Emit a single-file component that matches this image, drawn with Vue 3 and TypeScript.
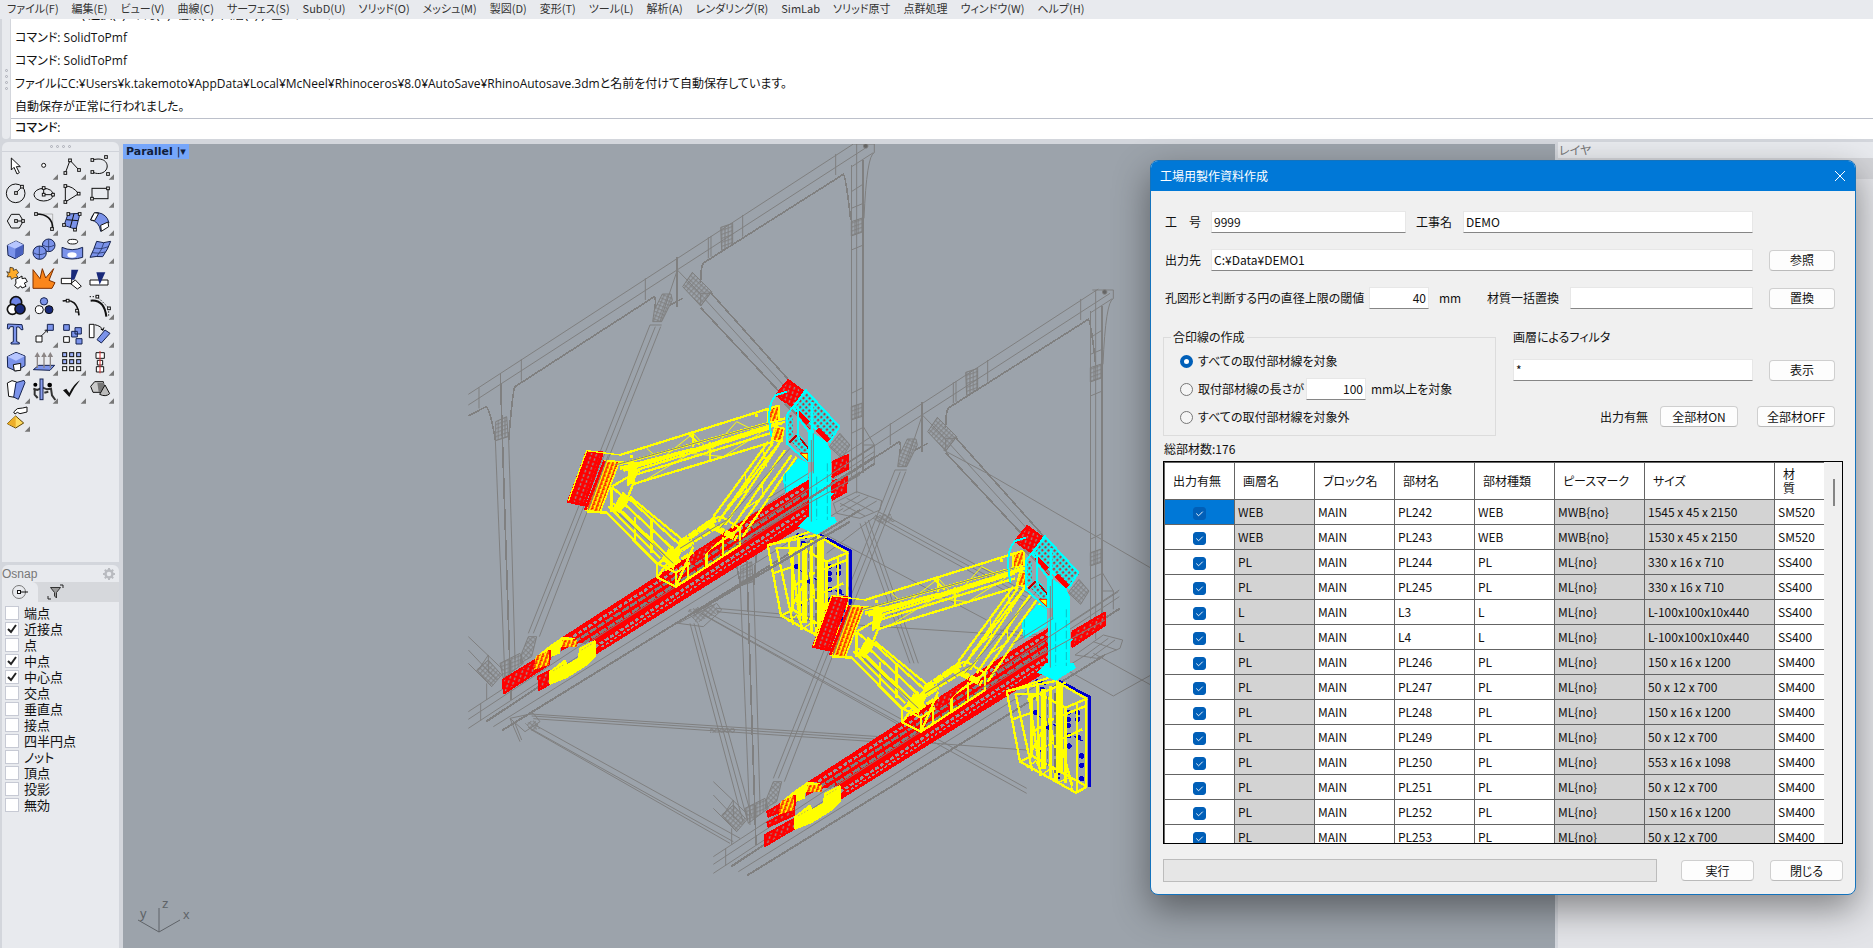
<script setup lang="ts">
import { ref } from 'vue'

const menus = ['ファイル(F)', '編集(E)', 'ビュー(V)', '曲線(C)', 'サーフェス(S)', 'SubD(U)', 'ソリッド(O)', 'メッシュ(M)', '製図(D)', '変形(T)', 'ツール(L)', '解析(A)', 'レンダリング(R)', 'SimLab', 'ソリッド原寸', '点群処理', 'ウィンドウ(W)', 'ヘルプ(H)']

const history = [
  'SolidToPmf ( 選択(S)  確認(C)  種類(T)  画層(L) ): 全オブジェクト',
  'コマンド: SolidToPmf',
  'コマンド: SolidToPmf',
  'ファイルにC:¥Users¥k.takemoto¥AppData¥Local¥McNeel¥Rhinoceros¥8.0¥AutoSave¥RhinoAutosave.3dmと名前を付けて自動保存しています。',
  '自動保存が正常に行われました。',
]

interface Tool { name: string; art: string; more: boolean }
const K = 'fill="none" stroke="#111" stroke-width="3"'
const sq = (x: number, y: number, f = '#fff', s = 8) =>
  `<rect x="${x - s / 2}" y="${y - s / 2}" width="${s}" height="${s}" fill="${f}" stroke="#111" stroke-width="3"/>`
const B = 'fill="#7b93ea" stroke="#15224f" stroke-width="3" stroke-linejoin="round"'
const W = 'fill="#fff" stroke="#111" stroke-width="3" stroke-linejoin="round"'
const tool = (name: string, art: string, more = true): Tool => ({ name, art, more })

// Each drawing sits on an 84-unit square.
const tools: Tool[] = [
  tool('選択', `<path d="M28 18V54l8-8 9 20 7-4-9-18h12z" ${W}/>`, false),
  tool('点', `<circle cx="41" cy="40" r="6" ${W}/>`),
  tool('ポリライン', `<path d="M22 63 36 25 63 54" ${K}/>${sq(22, 63)}${sq(36, 25)}${sq(63, 54)}`),
  tool('曲線', `<path d="M19 24C60 12 70 40 60 54S30 66 19 60" ${K}/>${sq(19, 24)}${sq(60, 15)}${sq(19, 60)}${sq(66, 66)}`),
  tool('円', `<circle cx="41" cy="40" r="28" ${K}/><path d="M42 39 60 20" ${K}/>${sq(42, 39)}${sq(60, 20)}`),
  tool('楕円', `<ellipse cx="41" cy="44" rx="29" ry="19" ${K}/><path d="M41 44V24M41 44H69" ${K}/>${sq(41, 44)}${sq(41, 24)}${sq(69, 44)}`),
  tool('円弧', `<path d="M22 18Q44 18 62 41M22 18V66L62 41" ${K}/>${sq(22, 18)}${sq(22, 66)}${sq(62, 41)}`),
  tool('長方形', `<rect x="18" y="25" width="48" height="31" ${K}/>${sq(66, 25)}${sq(18, 56)}`),
  tool('多角形', `<path d="M16 39 28 19H52L64 39 52 60H28z" ${K}/><path d="M42 39H64" ${K}/>${sq(42, 39)}${sq(63, 39)}`),
  tool('フィレット', `<path d="M18 18H68V62" fill="none" stroke="#999" stroke-width="2"/><path d="M18 18Q68 18 68 62" fill="none" stroke="#111" stroke-width="5"/>${sq(18, 18)}${sq(66, 63)}`),
  tool('サーフェス', `<path d="M30 18 66 16 54 64 18 52z" ${B}/><path d="M48 17 37 58M25 35 60 38" ${K}/>${sq(31, 18)}${sq(65, 18)}${sq(18, 51)}${sq(51, 65)}`),
  tool('スイープ', `<path d="M14 36Q22 10 36 14Q62 18 69 44Q54 46 44 70Q40 40 14 36z" ${B}/><path d="M14 36 25 14 38 16 26 38zM66 42 68 56 46 70 44 52z" ${W}/>`),
  tool('直方体', `<path d="M16 28 42 15 64 26 63 54 39 68 18 58z" ${B}/><path d="M16 28 40 38 64 26 42 15z" fill="#b7c6ff"/><path d="M40 38 39 68 63 54 64 26z" fill="#4a62c0"/>`),
  tool('球', `<circle cx="56" cy="28" r="19" ${B}/><path d="M38 27Q55 38 74 27M56 10V46" fill="none" stroke="#15224f" stroke-width="2"/><circle cx="29" cy="50" r="20" ${B}/><path d="M10 50Q28 62 48 50M28 30V70" fill="none" stroke="#15224f" stroke-width="2"/>`),
  tool('円筒', `<ellipse cx="44" cy="17" rx="15" ry="7" ${W}/><path d="M12 34Q42 48 74 34V64Q42 74 12 64z" ${B}/><ellipse cx="42" cy="57" rx="14" ry="8" fill="#fff"/>`),
  tool('メッシュ', `<path d="M32 16Q52 24 74 16Q66 40 50 62Q30 60 12 64Q24 40 32 16z" ${B}/><path d="M54 19Q48 42 32 62M24 36Q46 42 68 32M18 50Q38 54 58 48" fill="none" stroke="#15224f" stroke-width="2"/>`),
  tool('ブール', `<path d="M14 23 23 26 24 10 34 12 34 19 43 16 50 26 43 32 48 40 37 41 28 46 26 38 15 39 19 30z" fill="#ffab28" stroke="#111" stroke-width="2"/><path d="M41 46 50 42 60 36 60 44 70 42 76 53 67 57 72 67 60 72 56 66 48 73 38 65 42 57z" ${W} />`),
  tool('分解', `<path d="M9 17 30 44 37 14 47 42 71 14 57 49 75 56 66 73H9z" fill="#fa861c" stroke="#7e3000" stroke-width="3"/>`, false),
  tool('トリム', `<path d="M10 43H41V59H10zM38 59 52 48 70 67 58 75z" ${W}/><path d="M40 17H61L49 47H39z" fill="#18297a"/>`, false),
  tool('分割', `<rect x="12" y="48" width="54" height="15" ${W}/><path d="M31 25H58L41 62z" fill="#18297a"/>`, false),
  tool('グループ', `<circle cx="42" cy="31" r="17" fill="#6c83e7" stroke="#111" stroke-width="5"/><circle cx="31" cy="52" r="15" fill="#fff" stroke="#111" stroke-width="5"/><circle cx="54" cy="51" r="15" fill="#18297a" stroke="#111" stroke-width="5"/>`),
  tool('グループ解除', `<circle cx="42" cy="28" r="11" ${B}/><circle cx="28" cy="53" r="12" ${W}/><circle cx="57" cy="53" r="12" fill="#18297a" stroke="#111" stroke-width="3"/>`, false),
  tool('点編集', `<path d="M14 27Q58 17 63 70" fill="none" stroke="#111" stroke-width="5"/>${sq(29, 26)}${sq(57, 56)}`, false),
  tool('制御点', `<path d="M14 26Q55 22 61 74" fill="none" stroke="#111" stroke-width="6"/><path d="M11 14H34L68 48V74" fill="none" stroke="#111" stroke-width="3" stroke-dasharray="4 5"/>${sq(34, 14)}${sq(69, 49)}`),
  tool('文字', `<path d="M17 12 60 14 63 29 57 29 51 21H44V65L52 68V72H27V68L34 65V20H25L21 27 16 26z" ${B}/>`, false),
  tool('移動', `<rect x="18" y="48" width="18" height="18" ${W}/><path d="M33 49 52 30M52 30l-8 1M52 30l0 8" ${K}/><rect x="52" y="13" width="18" height="18" ${B}/>`),
  tool('配列', `<g ${B}><path d="M17 14H34V31H17zM51 23H70V42H51zM41 34H58V51H41zM54 56H72V72H54z"/></g><rect x="17" y="50" width="17" height="17" ${W}/>`, false),
  tool('回転', `<rect x="10" y="13" width="14" height="40" ${W}/><path d="M33 59 57 30 72 40 46 69z" ${B}/><path d="M26 14Q46 18 51 31L44 27M51 31l3-9" ${K}/>`),
  tool('ソリッド編集', `<path d="M16 26 42 13 69 24V53L42 69 17 58z" ${B}/><path d="M17 26 42 38 68 25 42 14z" fill="#b7c6ff"/><path d="M34 50 56 46V67L37 69z" ${W}/>`),
  tool('押し出し', `<path d="M10 65 26 52H74L60 67z" ${B}/><path d="M22 60V20M42 60V20M61 60V20M22 16l-5 9h10zM42 16l-5 9h10zM61 16l-5 9h10z" stroke="#8b8585" stroke-width="4" fill="#8b8585"/>`),
  tool('矩形配列', [20, 41, 62].map(y => [20, 41, 62].map(x => sq(x, y, y < 50 ? '#9cb1fa' : '#fff', 12)).join('')).join('')),
  tool('整列', `<rect x="30" y="14" width="25" height="17" ${W}/><rect x="34" y="37" width="16" height="14" ${W}/><rect x="31" y="56" width="22" height="16" ${W}/><path d="M42 9V76" stroke="#dd3030" stroke-width="3"/>`),
  tool('変形', `<path d="M16 21 30 14 44 18 38 64 20 61z" ${W}/><path d="M42 20 66 13 69 20 49 70 35 63z" ${B}/>`),
  tool('解析', `<circle cx="16" cy="26" r="6"/><circle cx="59" cy="27" r="7"/><path d="M10 38 22 42 38 35 51 40 63 38 66 58 76 72M14 38V56L23 66M43 50 55 47" fill="none" stroke="#333" stroke-width="6"/><rect x="30" y="9" width="9" height="62" fill="#8da0ef" stroke="#15224f" stroke-width="3"/>`),
  tool('検査', `<path d="M15 43 25 38 34 51Q48 23 66 13Q48 34 34 63z" fill="#111"/>`),
  tool('表示', `<path d="M14 31 26 17 52 17 55 33 45 49 21 49z" fill="#ccc" stroke="#111" stroke-width="3"/><path d="M34 20H54L52 45 38 49z" fill="#777"/><path d="M57 27 71 53Q59 64 41 55z" fill="#bbb" stroke="#111" stroke-width="3"/>`),
  tool('取得', `<path d="M16 59 41 36 65 57 41 72z" fill="#ffdc61" stroke="#5e4300" stroke-width="3"/><path d="M41 36V70L16 59z" fill="#edae29"/><path d="M35 24 46 14 62 12 75 9V24L54 29 46 25 39 30z" ${W}/>`),
]

const snaps = ref([
  { name: '端点', on: false }, { name: '近接点', on: true }, { name: '点', on: false },
  { name: '中点', on: true }, { name: '中心点', on: true }, { name: '交点', on: false },
  { name: '垂直点', on: false }, { name: '接点', on: false }, { name: '四半円点', on: false },
  { name: 'ノット', on: false }, { name: '頂点', on: false }, { name: '投影', on: false },
  { name: '無効', on: false },
])

const job = ref('9999')
const project = ref('DEMO')
const folder = ref('C:¥Data¥DEMO1')
const threshold = ref('40')
const replacement = ref('')
const minLength = ref('100')
const layerFilter = ref('*')
const markMode = ref('all')

const headers = ['出力有無', '画層名', 'ブロック名', '部材名', '部材種類', 'ピースマーク', 'サイズ', '材質']
const part = (kind: string, no: string, mark: string, size: string, grade: string) =>
  ({ on: true, kind, no, mark, size, grade })
const parts = ref([
  part('WEB', 'PL242', 'MWB{no}', '1545 x 45 x 2150', 'SM520'),
  part('WEB', 'PL243', 'MWB{no}', '1530 x 45 x 2150', 'SM520'),
  part('PL', 'PL244', 'ML{no}', '330 x 16 x 710', 'SS400'),
  part('PL', 'PL245', 'ML{no}', '330 x 16 x 710', 'SS400'),
  part('L', 'L3', 'ML{no}', 'L-100x100x10x440', 'SS400'),
  part('L', 'L4', 'ML{no}', 'L-100x100x10x440', 'SS400'),
  part('PL', 'PL246', 'ML{no}', '150 x 16 x 1200', 'SM400'),
  part('PL', 'PL247', 'ML{no}', '50 x 12 x 700', 'SM400'),
  part('PL', 'PL248', 'ML{no}', '150 x 16 x 1200', 'SM400'),
  part('PL', 'PL249', 'ML{no}', '50 x 12 x 700', 'SM400'),
  part('PL', 'PL250', 'ML{no}', '553 x 16 x 1098', 'SM400'),
  part('PL', 'PL251', 'ML{no}', '50 x 12 x 700', 'SM400'),
  part('PL', 'PL252', 'ML{no}', '150 x 16 x 1200', 'SM400'),
  part('PL', 'PL253', 'ML{no}', '50 x 12 x 700', 'SM400'),
])
const setAll = (on: boolean) => parts.value.forEach(p => { p.on = on })

// The bridge has two identical panels; the second one is shifted along the deck.
const frames = [
  { arm: 'translate(0 0)', post: 'translate(0 0)' },
  { arm: 'translate(735 435)', post: 'translate(717 438)' },
]
</script>

<template>
  <div class="app">
    <nav class="menubar">
      <button v-for="m in menus" :key="m" type="button">{{ m }}</button>
    </nav>

    <section class="command">
      <div class="grip"><i v-for="n in 4" :key="n"></i></div>
      <div class="console">
        <div class="history">
          <p v-for="(line, i) in history" :key="i">{{ line }}</p>
        </div>
        <label class="prompt">コマンド:<input type="text"></label>
      </div>
    </section>

    <div class="work">
      <aside class="side">
        <div class="toolbox">
          <div class="dots"><i v-for="n in 4" :key="n"></i></div>
          <div class="tools">
            <button v-for="t in tools" :key="t.name" type="button" :aria-label="t.name">
              <svg viewBox="0 0 84 84" v-html="t.art + (t.more ? '<path d=\'M84 67V83H68z\' fill=\'#777\'/>' : '')"></svg>
            </button>
          </div>
        </div>
        <div class="osnap">
          <header>
            <span>Osnap</span>
            <svg viewBox="0 0 14 14" class="gear"><circle cx="7" cy="7" r="3.5" fill="none" stroke="#b9bbc0" stroke-width="2.4" /><path d="M7 1v2.5M7 10.500v2.500M1 7h2.500M10.500 7H13M2.800 2.800l1.700 1.700M9.500 9.500l1.700 1.700M11.200 2.800 9.500 4.500M4.500 9.500l-1.700 1.700" stroke="#b9bbc0" stroke-width="2" /></svg>
          </header>
          <div class="tabs">
            <button type="button" class="active" aria-label="スナップ"><svg viewBox="0 0 18 16"><circle cx="8" cy="8" r="6.500" fill="none" stroke="#777" /><path d="M9 8h8" stroke="#111" /><rect x="6.500" y="6.500" width="3" height="3" fill="#fff" stroke="#111" /></svg></button>
            <button type="button" aria-label="フィルタ"><svg viewBox="0 0 18 16"><path d="M3.500 3.500h10l-4 5V14l-2-2V8.500z" fill="#999" stroke="#333" /><path d="M13 1h3v3M1 12v3h3" fill="none" stroke="#222" /></svg></button>
          </div>
          <ul>
            <li v-for="s in snaps" :key="s.name">
              <label><input v-model="s.on" type="checkbox">{{ s.name }}</label>
            </li>
          </ul>
        </div>
      </aside>

      <main class="viewport">
        <svg class="scene" viewBox="123 144 1432 804" preserveAspectRatio="xMinYMin slice" aria-hidden="true">
          <defs>
            <pattern id="mesh" width="11" height="11" patternUnits="userSpaceOnUse" patternTransform="rotate(42)"><path d="M0 5H11M5 0V11" stroke="#808080" stroke-width="3" /></pattern>
            <pattern id="mesh2" width="11" height="11" patternUnits="userSpaceOnUse" patternTransform="rotate(22)"><path d="M0 5H11M5 0V11" stroke="#808080" stroke-width="3" /></pattern>
            <pattern id="grid" width="10" height="12" patternUnits="userSpaceOnUse" patternTransform="skewY(-20)"><path d="M0 5H10M5 0V12" stroke="#808080" stroke-width="3" /></pattern>
            <pattern id="redholes" width="14" height="14" patternUnits="userSpaceOnUse" patternTransform="rotate(20)"><rect width="14" height="14" fill="#f00" /><path d="M7 3v8" stroke="#9b8d8d" stroke-width="4" /></pattern>
            <pattern id="spots" width="12" height="13" patternUnits="userSpaceOnUse" patternTransform="rotate(20)"><rect width="12" height="13" fill="#ff0" /><path d="M3 2h6v4H5v5h4" stroke="#f00" stroke-width="3" fill="none" /></pattern>
            <pattern id="net" width="13" height="13" patternUnits="userSpaceOnUse" patternTransform="rotate(47)"><rect width="13" height="13" fill="#8b9299" /><path d="M0 2H13M2 0V13" stroke="#0ff" stroke-width="4" /><path d="M8 5v6" stroke="#a03030" stroke-width="4" /></pattern>
          </defs>
          <g transform="translate(460 140) scale(.333333)" fill="none" stroke-linejoin="round" shape-rendering="crispEdges">
            <g stroke="#808080" stroke-width="3">
              <path d="M215 1728 1260 1798 1700 1830M220 1736 1260 1806M210 1722 1260 1790M205 1762 820 2105M225 1755 840 2095M215 1770 810 2110" />
              <path d="M690 1450 850 2050M702 1450 862 2040M714 1450 875 2030M715 1415 1700 1960M730 1410 1700 1945M725 1422 1330 1762M770 1405 1080 1432M770 1415 1190 1455 1760 1492M1200 1150 1350 1570M1215 1145 1362 1570M1225 1140 1375 1570" />
              <path d="M1245 1125 1700 1372M1255 1115 1720 1368M1240 1135 1690 1382M1080 1175 1580 1440M1450 930 1600 1010 2100 1300M1245 1130 1100 1240M1730 1540 1960 1668 2100 1590M1900 1540 2100 1650M1620 1470 1780 1490" />
              <path d="M1120 1090 1190 1055 1265 1082 1260 1110 1200 1135 1130 1120ZM1140 1100 1200 1065M1150 1115 1225 1070M1175 1127 1250 1083M1160 1075 1240 1115M1140 1090 1215 1128" />
              <path d="M1845 1545 1930 1485 1988 1500 1980 1525 1910 1555ZM1870 1550 1945 1495M1890 1555 1965 1500M1900 1505 1970 1530" />
              <path d="M655 1450 770 1390 785 1410 730 1460ZM150 1735 220 1720 240 1745 195 1775ZM150 1735 180 1805M165 1750 185 1800" />
            </g>
            <g fill="url(#mesh)"><path d="M680 1410 760 1390 780 1415 710 1450ZM1240 1130 1290 1120 1305 1145 1255 1150ZM195 1750 225 1740 240 1765 215 1775ZM750 1765H825V1778H750Z" /></g>

            <g v-for="f in frames" :key="'truss' + f.arm">
              <g :transform="f.arm" stroke="#808080" stroke-width="3">
                <path d="M25 763 1180 12M25 795 1215 25M57 743V805M184 658V722M556 415V480M745 292V355M753 288V350M848 225V290M1127 42V105M652 390 600 545M652 390 720 460" />
                <path d="M25 828 78 800Q90 805 106 900M146 900Q158 750 165 740L583 470Q590 480 583 510M630 495 668 475M722 430Q722 375 732 368L1150 103Q1158 110 1172 240" stroke-width="5" />
                <path d="M121 700 137 1200 153 1680M652 352V500" stroke-width="5" />
                <path d="M106 900 118 1200 135 1620M146 900 155 1200 165 1560M570 555 340 1140 205 1480M586 560 355 1140 220 1480M602 560 372 1140 238 1490M570 555H605" />
                <path d="M752 458 1120 870M722 503 1000 800" stroke-width="5" />
                <path d="M737 480 1020 790M722 498 755 455M722 498V460H755" />
                <path d="M25 1715 1243 915M25 1738 1243 935M25 1765 1200 995M100 1760 1150 1105M25 1490 130 1590M25 1530 110 1620M25 1570 95 1640M62 1690V1742M80 1630V1680M55 1590 85 1545V1600" />
                <path d="M78 1745 1245 970M125 1772 1200 1110" stroke-width="6" />
                <path d="M107 845 140 830 145 890 107 902Z" fill="url(#grid)" />
                <path d="M607 462 633 462 637 480 605 545 578 545 583 510Z" fill="url(#mesh2)" />
                <path d="M697 397 755 455 722 498 668 440Z" fill="url(#mesh)" />
                <path d="M782 262 818 250V315L785 332Z" fill="url(#grid)" />
                <path d="M50 1590 85 1560 125 1605 95 1640ZM185 1540 205 1490 230 1490 215 1550 180 1570Z" fill="url(#mesh)" />
                <path d="M120 1570 180 1540 190 1570 130 1615Z" fill="url(#grid)" />
              </g>
              <g :transform="f.post" stroke="#808080" stroke-width="3">
                <path d="M1175 75V1010M1210 60V1000" stroke-width="5" />
                <path d="M1190 12V1060M1174 155 1210 132M1174 205 1210 190M1174 330 1210 315M1174 760 1210 742M1174 880 1210 862M1210 860 1243 915V970M1210 915H1243M1180 12 1243 12V38Q1220 45 1212 235M1175 80 1240 38" />
                <path d="M1174 245 1210 233V275L1174 288ZM1174 800 1210 788V828L1174 840Z" fill="url(#grid)" />
                <path d="M1140 880 1170 915 1145 955 1108 920Z" fill="url(#mesh)" />
                <circle cx="1217" cy="18" r="7" fill="#666" />
              </g>
            </g>

            <path d="M1120 965 1165 945V985L1118 1010ZM1118 1025 1160 1010 1158 1055 1118 1078ZM1838 1475 1935 1418V1455L1838 1520Z" fill="url(#redholes)" stroke="#f00" stroke-width="7" />

            <template v-for="(f, i) in frames" :key="'steel' + f.arm">
              <g :transform="f.arm">
                <path d="M305 1495 870 1130 1045 1022V1145L410 1540 405 1500 345 1510 305 1530Z" fill="#f00" stroke="#f00" stroke-width="4" />
                <path d="M325 1499 1035 1042M405 1521 1040 1108" stroke="#9a9499" stroke-width="8" stroke-dasharray="12 6" />
                <path d="M425 1521 1040 1125" stroke="#9a9499" stroke-width="5" stroke-dasharray="9 6" />
                <path d="M340 1508 1040 1060M370 1510 1040 1080" stroke="#808080" stroke-width="8" stroke-dasharray="24 5" />
                <path d="M395 1502 1040 1088" stroke="#808080" stroke-width="3" />
                <path d="M228 1550 265 1520 308 1490 345 1495 300 1525V1540L232 1568Z" fill="#ff0" />
                <template v-if="i === 0">
                  <path d="M128 1620 270 1532 268 1572 132 1660ZM235 1610 270 1592V1632L237 1650Z" fill="url(#redholes)" stroke="#f00" stroke-width="6" />
                </template>
                <template v-else>
                  <path d="M187 1580 270 1532V1562L190 1595ZM187 1612 268 1570V1590L190 1625ZM180 1650 270 1600V1630L180 1683Z" fill="url(#redholes)" stroke="#f00" stroke-width="6" />
                </template>
                <path d="M228 1548 268 1532V1575L220 1590M305 1500H350V1520H305Z" fill="url(#spots)" />
                <path d="M270 1595 315 1560 322 1575 355 1555 360 1525 405 1503V1550L380 1575 320 1612 270 1632Z" fill="#ff0" stroke="#ff0" stroke-width="4" />
                <path d="M280 1592 310 1575M365 1530 395 1512" stroke="#888" stroke-width="2" stroke-dasharray="4 6" />

                <path d="M382 935 428 938 372 1095 325 1085Z" fill="url(#redholes)" stroke="#f00" stroke-width="8" />
                <path d="M380 945 330 1085" stroke="#f00" stroke-width="14" />
                <path d="M435 962 478 965 420 1117 377 1110Z" fill="url(#spots)" stroke="#ff0" stroke-width="5" />
                <path d="M434 962 375 1110" stroke="#f00" stroke-width="8" />
                <path d="M325 1083 380 932 480 945" stroke="#ff0" stroke-width="4" />
                <g stroke="#ff0" stroke-width="7">
                  <path d="M480 945 955 797M470 975 975 835M490 992 965 850M520 1006 930 880M520 1032 940 905M475 967 560 972 975 845M530 990 930 865M700 875V920M690 885 720 915M750 905V960M455 1040 540 990M520 1030 500 1080 455 1040" />
                  <path d="M700 930 955 850M480 985 700 928" stroke-width="10" />
                  <path d="M560 925 600 960 700 880 750 935 830 845 880 870M560 1018 690 940 790 950 900 880" stroke-width="3" />
                  <path d="M380 1115 440 1118 595 1275M445 1100 600 1255M460 1090 622 1245M475 1075 640 1228M495 1065 660 1215M510 1070 680 1210M525 1130V1200M575 1140V1240M455 1040V1115" />
                  <path d="M490 1090 650 1240M475 1110 620 1255" stroke-width="4" />
                  <path d="M925 905 760 1130M938 910 775 1145M955 915 795 1155M975 930 815 1165M995 945 835 1168M1010 950 848 1190M965 900 785 1130" />
                  <path d="M910 930 920 980M855 1000 860 1050 800 1100M905 1030 910 1070 850 1110" stroke-width="4" />
                  <path d="M595 1270 760 1135 785 1130 840 1165V1215L648 1340 592 1312V1270L648 1298 840 1165M648 1298V1340M685 1265V1315M740 1230V1285M790 1190V1250M592 1312 640 1245M648 1340 700 1220M595 1275 640 1220" />
                  <path d="M660 1210 770 1135M610 1260 700 1205M735 1150 780 1170 830 1195" stroke-width="18" stroke-dasharray="30 3" />
                  <path d="M625 1250 800 1145M615 1290 700 1235" stroke-width="10" stroke-dasharray="26 4" />
                </g>
                <path d="M690 1250 740 1218 780 1200 740 1240 690 1278Z" fill="url(#redholes)" />
                <path d="M505 985 532 980 525 1025 500 1040ZM488 1055 512 1075 475 1125 452 1115ZM625 1225 665 1235 640 1290 605 1260Z" fill="#ff0" />
                <path d="M925 808 957 797V840L925 848ZM945 860 972 865 965 905 935 900Z" fill="url(#spots)" stroke="#ff0" stroke-width="5" />
                <circle cx="890" cy="827" r="5" fill="#ff0" /><circle cx="515" cy="949" r="5" fill="#ff0" />
                <path d="M445 945 385 1110M470 1115 640 1270M465 975 930 848M780 1165 990 925M660 1225 800 1140" stroke="#808080" stroke-width="3" />
              </g>

              <g :transform="f.post">
                <g fill="#00c">
                  <circle v-for="p in [[1108,1280],[1136,1280],[1108,1300],[1136,1300],[1108,1318],[1050,1325],[1110,1348],[1138,1355],[1020,1390],[1075,1395],[1110,1380],[1148,1410],[1148,1438],[1148,1478],[1010,1280],[1030,1210]]" :key="p.join()" :cx="p[0]" :cy="p[1]" r="8" />
                </g>
                <path d="M1010 1182 1040 1195M1078 1185 1171 1232V1504" stroke="#00c" stroke-width="9" />
                <path d="M1000 1280 1150 1365M1080 1240V1480" stroke="#00c" stroke-width="4" stroke-dasharray="12 6" />
                <g stroke="#ff0" stroke-width="7">
                  <path d="M923 1215 963 1427 1131 1520 1161 1504V1237L1070 1185 923 1215M963 1427 1000 1410 1161 1500M923 1217 1050 1175M1165 1237 1100 1265V1490M1135 1250V1515M1100 1265 1025 1225 950 1225 1000 1455" />
                  <path d="M985 1200 1025 1470M1015 1190 1020 1450M998 1220V1410M1055 1200V1480M1075 1190V1485M940 1300 1000 1280M1000 1340 1060 1300 1160 1260M1010 1395 1150 1330M985 1240 1100 1190M990 1410 1050 1300 1085 1460M1065 1485 1090 1390 1120 1500" />
                  <path d="M1033 1210V1450M1085 1200V1460" stroke-width="14" />
                  <path d="M985 1445 1010 1425 1030 1465 1060 1445 1075 1490 1110 1475 1120 1510" stroke-width="4" />
                </g>
                <path d="M1068 1220V1460M1045 1230V1440" stroke="#777" stroke-width="4" stroke-dasharray="25 8" />

                <path d="M985 720 1032 755 1000 805 948 765Z" fill="url(#redholes)" stroke="#f00" stroke-width="6" />
                <path d="M980 755 948 765Q915 800 935 890" stroke="#0ff" stroke-width="6" />
                <path d="M1002 808 1055 865" stroke="#f00" stroke-width="14" />
                <path d="M975 790 1055 865" stroke="#888" stroke-width="9" />
                <path d="M985 820 1000 830 1000 885 985 900ZM995 905 1020 885 1040 910 1040 955Z" fill="url(#net)" />
                <path d="M1037 750 1138 860 1110 905 1000 805Z" fill="url(#net)" stroke="#0ff" stroke-width="6" />
                <path d="M1012 815 1045 850M1072 868 1106 903" stroke="#f00" stroke-width="14" />
                <path d="M1035 755 980 825V910L1042 965M1015 800V890M985 910 1010 885 1045 925V965M1012 830 1050 880M1055 785V880" stroke="#0ff" stroke-width="6" />
                <path d="M988 908 1010 886M1020 895 1045 925" stroke="#c00000" stroke-width="5" />
                <path d="M1020 940H1044V962Z" fill="#ff0" stroke="#f00" stroke-width="3" />
                <path d="M968 1010 1015 955 1045 970V1020L975 1060Z" fill="#0ff" />
                <path d="M1062 880 1100 905 1114 935V1060H1122L1114 1070V1145L1047 1170V1000L1062 990Z" fill="#0ff" />
                <path d="M1045 870V965H1062V870ZM1015 1160 1045 1130 1125 1132 1131 1146 1070 1184Z" fill="#0ff" />
                <path d="M1054 900V1145M1060 880V1000" stroke="#808080" stroke-width="3" />
                <path d="M1102 970V1140M1070 1010V1140M976 1000V1055" stroke="#159ea7" stroke-width="2" stroke-dasharray="24 8" />
              </g>

              <g :transform="f.arm" stroke="#808080">
                <path d="M860 1168 1240 920M820 1215 1200 1005M925 1075 1045 1000" stroke-width="3" />
                <path v-if="i === 0" d="M850 1200 1245 950M700 1420 1170 1145" stroke-width="7" />
              </g>
            </template>
          </g>
        </svg>
        <button type="button" class="view-name">Parallel <span>|▾</span></button>
        <svg class="axes" viewBox="0 0 60 40" aria-hidden="true">
          <path d="M24 9v24L3 21M24 33 45 21" fill="none" stroke="#5f6368" />
          <text x="27" y="9">z</text><text x="5" y="19">y</text><text x="48" y="20">x</text>
        </svg>
      </main>

      <aside class="layers"><h2>レイヤ</h2><div class="band"></div></aside>
    </div>

    <section class="dialog" role="dialog" aria-labelledby="dialog-title">
      <header class="title">
        <h1 id="dialog-title">工場用製作資料作成</h1>
        <button type="button" aria-label="閉じる"><svg viewBox="0 0 12 12"><path d="M1 1 11 11M11 1 1 11" stroke="#fff" /></svg></button>
      </header>

      <form class="body" @submit.prevent>
        <div class="row">
          <label for="job">工　号</label>
          <input id="job" v-model="job" class="job" type="text">
          <label for="project" class="tight">工事名</label>
          <input id="project" v-model="project" class="grow" type="text">
          <span class="spacer"></span>
        </div>
        <div class="row">
          <label for="folder">出力先</label>
          <input id="folder" v-model="folder" class="grow" type="text">
          <button type="button" class="btn">参照</button>
        </div>
        <div class="row">
          <label for="threshold" class="long">孔図形と判断する円の直径上限の閾値</label>
          <input id="threshold" v-model="threshold" class="num" type="text">
          <span class="unit">mm</span>
          <label for="replacement" class="material">材質一括置換</label>
          <input id="replacement" v-model="replacement" class="grow" type="text">
          <button type="button" class="btn">置換</button>
        </div>

        <div class="options">
          <fieldset>
            <legend>合印線の作成</legend>
            <label><input v-model="markMode" type="radio" name="mark" value="all">すべての取付部材線を対象</label>
            <div class="inline">
              <label><input v-model="markMode" type="radio" name="mark" value="length">取付部材線の長さが</label>
              <input v-model="minLength" class="num" type="text" aria-label="長さ">
              <span>mm以上を対象</span>
            </div>
            <label><input v-model="markMode" type="radio" name="mark" value="none">すべての取付部材線を対象外</label>
          </fieldset>
          <div class="filter">
            <label for="filter">画層によるフィルタ</label>
            <div class="row">
              <input id="filter" v-model="layerFilter" class="grow" type="text">
              <button type="button" class="btn">表示</button>
            </div>
            <div class="toggle">
              <span>出力有無</span>
              <button type="button" class="btn" @click="setAll(true)">全部材ON</button>
              <button type="button" class="btn" @click="setAll(false)">全部材OFF</button>
            </div>
          </div>
        </div>

        <p class="total">総部材数:176</p>
        <div class="list">
          <div class="clip">
            <table>
              <colgroup><col class="c70"><col class="c80"><col class="c80"><col class="c80"><col class="c80"><col class="c90"><col class="c130"><col class="c50"></colgroup>
              <thead><tr><th v-for="h in headers" :key="h" scope="col">{{ h }}</th></tr></thead>
              <tbody>
                <tr v-for="(p, i) in parts" :key="p.no">
                  <td class="tick" :class="{ current: i === 0 }"><input v-model="p.on" type="checkbox" :aria-label="p.no"></td>
                  <td class="locked">{{ p.kind }}</td>
                  <td>MAIN</td>
                  <td>{{ p.no }}</td>
                  <td>{{ p.kind }}</td>
                  <td class="locked">{{ p.mark }}</td>
                  <td class="locked">{{ p.size }}</td>
                  <td>{{ p.grade }}</td>
                </tr>
              </tbody>
            </table>
          </div>
          <div class="scroll"><i></i></div>
        </div>

        <footer>
          <div class="progress" role="progressbar" aria-label="進捗"></div>
          <button type="button" class="btn">実行</button>
          <button type="button" class="btn">閉じる</button>
        </footer>
      </form>
    </section>
  </div>
</template>

<style>
body { margin: 0; overflow: hidden; }
</style>

<style scoped>
.app {
  position: relative;
  display: flex;
  flex-direction: column;
  height: 100vh;
  overflow: hidden;
  background: #d3d6dc;
  color: #111;
  font: 12px/16px "Noto Sans CJK JP", "Open Sans", sans-serif;
  font-feature-settings: "palt";
}
.app * { box-sizing: border-box; }
button, input { font: inherit; font-feature-settings: inherit; color: inherit; margin: 0; }
button { padding: 0; border: 0; background: none; }
h1, h2, p, ul { margin: 0; padding: 0; font-weight: 400; font-size: 12px; list-style: none; }

.menubar { display: flex; gap: 13px; height: 19px; padding: 0 7px; background: #e8eaee; color: #333; font-size: 11px; flex: none; }
.menubar button { height: 16px; line-height: 16px; white-space: nowrap; }

.command { display: flex; height: 120px; flex: none; font-family: "Open Sans", "Noto Sans CJK JP", sans-serif; }
.grip { width: 8px; margin: 0 1px 0 2px; background: #e8eaee; border-radius: 0 0 6px 6px; display: flex; flex-direction: column; align-items: center; justify-content: center; gap: 3px; }
.grip i, .dots i { width: 3px; height: 3px; border: 1px solid #aaadb5; border-radius: 50%; }
.console { flex: 1; background: #fff; display: flex; flex-direction: column; min-width: 0; }
.history { height: 100px; overflow: hidden; display: flex; flex-direction: column; justify-content: flex-end; border-bottom: 1px solid #bcc0ca; padding-left: 4px; }
.history p { flex: none; line-height: 23px; white-space: pre; }
.prompt { display: flex; padding-left: 4px; line-height: 18px; font-weight: 500; }
.prompt input { flex: 1; border: 0; outline: 0; padding: 0; height: 18px; }

.work { display: flex; flex: 1; min-height: 0; padding-top: 3px; }
.side { width: 117px; margin: 0 4px 0 2px; display: flex; flex-direction: column; gap: 3px; flex: none; }
.toolbox { height: 420px; background: #e8eaee; border-radius: 6px 6px 0 0; }
.dots { height: 10px; display: flex; gap: 3px; align-items: center; justify-content: center; border-bottom: 1px solid #d0d3da; }
.tools { display: grid; grid-template-columns: repeat(4, 28px); grid-auto-rows: 28px; }
.tools button, .tools svg { display: block; width: 28px; height: 28px; }
.osnap { flex: 1; background: #e8eaee; border-radius: 6px 6px 0 0; }
.osnap header { display: flex; justify-content: space-between; align-items: center; height: 17px; padding-right: 3px; color: #777; font-family: "Liberation Sans", sans-serif; }
.gear { width: 14px; height: 14px; }
.tabs { display: flex; height: 20px; background: #d6d8dc; }
.tabs button { width: 36px; height: 20px; display: flex; align-items: center; justify-content: center; }
.tabs .active { background: #e8eaee; border-radius: 0 6px 0 0; }
.tabs svg { width: 18px; height: 16px; }
.osnap ul { padding: 3px 0 0 3px; }
.osnap li { height: 16px; }
.osnap label { display: flex; align-items: center; gap: 5px; font-size: 13px; line-height: 16px; }
.osnap input { appearance: none; width: 14px; height: 14px; border: 1px solid #c7cad4; background: #fff; }
.osnap input:checked { background: #fff url("data:image/svg+xml,%3Csvg xmlns='http://www.w3.org/2000/svg' viewBox='0 0 12 12'%3E%3Cpath d='M2 6l3 3 5-7' fill='none' stroke='%23222' stroke-width='2'/%3E%3C/svg%3E"); }

.viewport { position: relative; flex: 1; min-width: 0; margin-top: 2px; background: #9ca3ab; overflow: hidden; }
.scene { display: block; width: 100%; height: 100%; }
.view-name { position: absolute; left: 0; top: 0; padding: 0 3px; height: 15px; background: #76a6fa; color: #10203c; font: bold 11px/15px "DejaVu Sans", sans-serif; }
.view-name span { font-weight: 400; }
.axes { position: absolute; left: 12px; bottom: 9px; width: 60px; height: 40px; font: 13px "Liberation Sans", sans-serif; fill: #5f6368; overflow: visible; }

.layers { width: 315px; margin-left: 3px; background: #e3e4e8; flex: none; }
.layers h2 { height: 16px; line-height: 16px; background: #e8eaee; color: #777; padding-left: 1px; }
.band { height: 21px; background: #d3d4d8; }

.dialog { position: absolute; top: 160px; right: 17px; bottom: 53px; width: 706px; display: flex; flex-direction: column; border: 1px solid #1473bd; border-radius: 8px; overflow: hidden; background: #f0f0f0; box-shadow: 0 14px 36px rgba(0, 0, 0, .42); }
.title { display: flex; align-items: center; justify-content: space-between; height: 30px; flex: none; padding: 0 9px; background: #0078d7; color: #fff; }
.title button { width: 12px; height: 12px; }
.title svg { display: block; width: 12px; height: 12px; }
.body { flex: 1; min-height: 0; display: flex; flex-direction: column; padding: 20px 12px 12px; }
.row { display: flex; align-items: center; height: 22px; margin-bottom: 16px; flex: none; padding-right: 8px; }
.row > label:first-child { width: 48px; padding-left: 2px; flex: none; }
.row > label.long { width: 206px; white-space: nowrap; }
.row input, .inline .num { height: 22px; border: 1px solid #e7e7e7; border-bottom-color: #868686; background: #fff; padding: 0 2px 2px; outline: 0; border-radius: 0; min-width: 0; }
.row .job { width: 195px; }
.tight { width: 57px; padding-left: 10px; flex: none; }
.grow { flex: 1; }
.spacer { width: 82px; flex: none; }
.row .num, .inline .num { width: 60px; text-align: right; flex: none; }
.unit { width: 58px; padding-left: 10px; flex: none; }
.material { width: 83px; flex: none; }
.btn { width: 66px; height: 21px; line-height: 18px; border: 1px solid #cfcfcf; border-bottom-color: #bababa; border-radius: 4px; background: #fdfdfd; flex: none; white-space: nowrap; }
.row .btn { margin-left: 16px; }

.options { display: flex; gap: 17px; align-items: flex-start; flex: none; padding-top: 3px; }
fieldset { width: 333px; height: 107px; margin: 1px 0 0; padding: 6px 15px 0 16px; border: 1px solid #dcdcdc; min-width: 0; flex: none; }
legend { padding: 0 2px; margin-left: -9px; line-height: 16px; }
fieldset label { display: flex; align-items: center; gap: 5px; height: 20px; white-space: nowrap; }
fieldset input[type="radio"] { appearance: none; width: 13px; height: 13px; border: 1px solid #777; border-radius: 50%; background: #f5f5f5; flex: none; }
fieldset input[type="radio"]:checked { border: 4px solid #005fb8; background: #fff; }
.inline { display: flex; align-items: center; height: 36px; }
.inline label { width: 126px; }
.inline span { padding-left: 5px; }
.filter { flex: 1; padding-top: 1px; }
.filter > label { display: block; margin-bottom: 14px; }
.filter .row { margin-bottom: 25px; }
.toggle { display: flex; align-items: center; justify-content: flex-end; padding-right: 8px; }
.toggle .btn { width: 78px; }
.toggle .btn:nth-of-type(1) { margin: 0 19px 0 12px; }

.total { margin: 5px 0 4px 1px; line-height: 16px; }
.list { flex: 1; min-height: 0; display: flex; border: 1px solid #000; margin-bottom: 15px; }
.clip { overflow: hidden; flex: 1; border: solid #646464; border-width: 1px 0 0 1px; }
.scroll { width: 18px; flex: none; padding: 17px 0 0 9px; }
.scroll i { display: block; width: 2px; height: 27px; background: #858585; }
table { width: 100%; table-layout: fixed; border-collapse: separate; border-spacing: 0; background: #fff; }
.c70 { width: 70px; } .c80 { width: 80px; } .c90 { width: 90px; } .c130 { width: 130px; } .c50 { width: 50px; }
th, td { border: solid #646464; border-width: 0 1px 1px 0; text-align: left; font-weight: 400; }
th { height: 37px; padding: 0 15px 0 8px; line-height: 14px; white-space: nowrap; }
th:last-child { white-space: normal; padding-right: 20px; }
td { height: 25px; padding: 0 3px; line-height: 16px; white-space: nowrap; }
.locked { background: #d3d3d3; }
.tick { text-align: center; }
.tick input { appearance: none; display: inline-block; vertical-align: middle; width: 13px; height: 13px; border: 1px solid #777; border-radius: 3px; }
.tick input:checked { border-color: #005fb8; background: #005fb8 url("data:image/svg+xml,%3Csvg xmlns='http://www.w3.org/2000/svg' viewBox='0 0 12 12'%3E%3Cpath d='M2.500 6l2.500 2.500 4.500-4.500' fill='none' stroke='white'/%3E%3C/svg%3E"); }
.current { background: #0078d7; }
footer { display: flex; align-items: center; flex: none; }
.progress { flex: 1; height: 23px; border: 1px solid #bcbcbc; background: #e6e6e6; margin-right: 24px; }
footer .btn { width: 73px; }
footer .btn + .btn { margin-left: 16px; }
</style>
